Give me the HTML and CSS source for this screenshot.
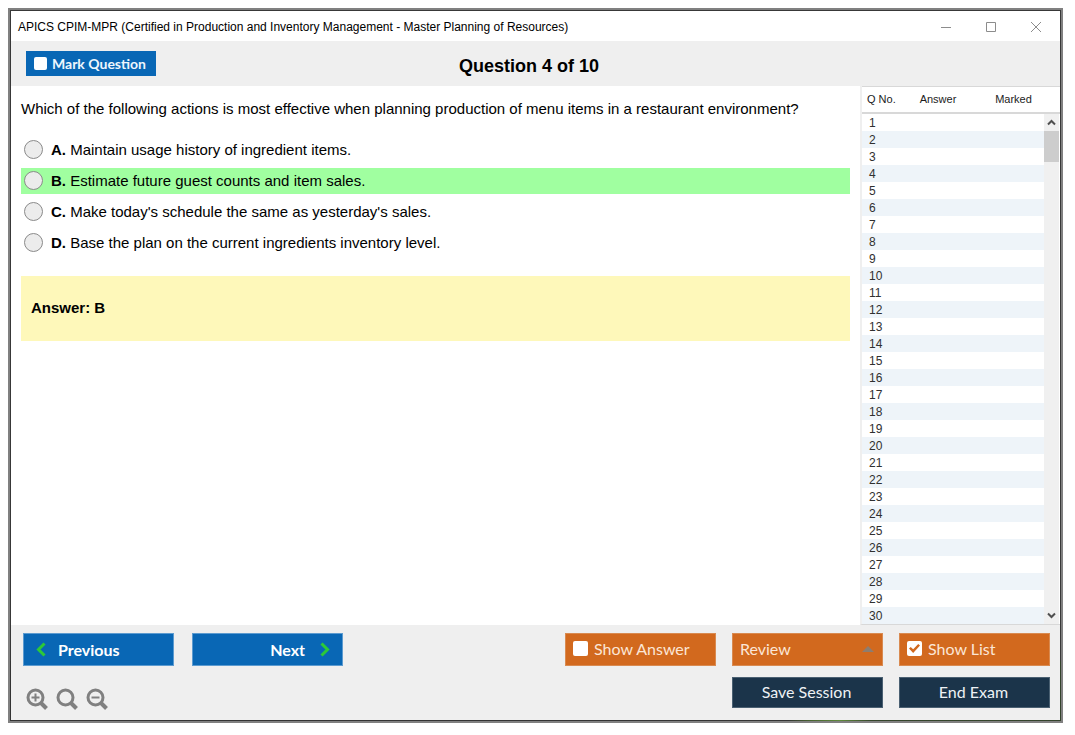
FILE: index.html
```html
<!DOCTYPE html>
<html lang="en">
<head>
    <meta charset="UTF-8">
    <meta name="viewport" content="width=device-width, initial-scale=1.0">
    <title>APICS CPIM-MPR</title>
    <link rel="stylesheet" href="styles.css">
</head>
<body>
    <div class="window">
        <div class="titlebar">
            <span class="title">APICS CPIM-MPR (Certified in Production and Inventory Management - Master Planning of Resources)</span>
            <div class="window-buttons">
                <button aria-label="Minimize"><svg width="12" height="12" viewBox="0 0 12 12"><path d="M1 6.500h10"/></svg></button>
                <button aria-label="Maximize"><svg width="12" height="12" viewBox="0 0 12 12"><path d="M1.500 1.500h9v9h-9z"/></svg></button>
                <button aria-label="Close"><svg width="12" height="12" viewBox="0 0 12 12"><path d="M1 1l10 10M11 1L1 11"/></svg></button>
            </div>
        </div>

        <header class="header">
            <label class="mark"><input type="checkbox"> Mark Question</label>
            <h1>Question 4 of 10</h1>
        </header>

        <div class="content">
            <main class="question">
                <p>Which of the following actions is most effective when planning production of menu items in a restaurant environment?</p>
                <div class="options">
                    <label class="option"><input type="radio" name="choice"><span><b>A.</b> Maintain usage history of ingredient items.</span></label>
                    <label class="option correct"><input type="radio" name="choice"><span><b>B.</b> Estimate future guest counts and item sales.</span></label>
                    <label class="option"><input type="radio" name="choice"><span><b>C.</b> Make today's schedule the same as yesterday's sales.</span></label>
                    <label class="option"><input type="radio" name="choice"><span><b>D.</b> Base the plan on the current ingredients inventory level.</span></label>
                </div>
                <div class="answer">Answer: B</div>
            </main>

            <aside class="list">
                <table>
                    <thead>
                        <tr><th class="col-no">Q No.</th><th class="col-answer">Answer</th><th class="col-marked">Marked</th></tr>
                    </thead>
                    <tbody>
                        <tr><td>1</td><td></td><td></td></tr>
                        <tr><td>2</td><td></td><td></td></tr>
                        <tr><td>3</td><td></td><td></td></tr>
                        <tr><td>4</td><td></td><td></td></tr>
                        <tr><td>5</td><td></td><td></td></tr>
                        <tr><td>6</td><td></td><td></td></tr>
                        <tr><td>7</td><td></td><td></td></tr>
                        <tr><td>8</td><td></td><td></td></tr>
                        <tr><td>9</td><td></td><td></td></tr>
                        <tr><td>10</td><td></td><td></td></tr>
                        <tr><td>11</td><td></td><td></td></tr>
                        <tr><td>12</td><td></td><td></td></tr>
                        <tr><td>13</td><td></td><td></td></tr>
                        <tr><td>14</td><td></td><td></td></tr>
                        <tr><td>15</td><td></td><td></td></tr>
                        <tr><td>16</td><td></td><td></td></tr>
                        <tr><td>17</td><td></td><td></td></tr>
                        <tr><td>18</td><td></td><td></td></tr>
                        <tr><td>19</td><td></td><td></td></tr>
                        <tr><td>20</td><td></td><td></td></tr>
                        <tr><td>21</td><td></td><td></td></tr>
                        <tr><td>22</td><td></td><td></td></tr>
                        <tr><td>23</td><td></td><td></td></tr>
                        <tr><td>24</td><td></td><td></td></tr>
                        <tr><td>25</td><td></td><td></td></tr>
                        <tr><td>26</td><td></td><td></td></tr>
                        <tr><td>27</td><td></td><td></td></tr>
                        <tr><td>28</td><td></td><td></td></tr>
                        <tr><td>29</td><td></td><td></td></tr>
                        <tr><td>30</td><td></td><td></td></tr>
                    </tbody>
                </table>
                <div class="scroll-side">
                    <div class="scroll-head"></div>
                    <div class="scrollbar">
                        <button aria-label="Scroll up"><svg width="9" height="7" viewBox="0 0 9 7"><path d="M1 5.500l3.500-3.500L8 5.500"/></svg></button>
                        <div class="thumb"></div>
                        <button class="down" aria-label="Scroll down"><svg width="9" height="7" viewBox="0 0 9 7"><path d="M1 1.500L4.500 5 8 1.500"/></svg></button>
                    </div>
                </div>
            </aside>
        </div>

        <footer class="footer">
            <div class="nav">
                <div class="nav-buttons">
                    <button class="btn blue previous"><svg width="10" height="15" viewBox="0 0 10 15"><path d="M8.500 1.500l-6 6 6 6"/></svg>Previous</button>
                    <button class="btn blue next">Next<svg width="10" height="15" viewBox="0 0 10 15"><path d="M1.500 1.500l6 6-6 6"/></svg></button>
                </div>
                <div class="zoom">
                    <button aria-label="Zoom in"><svg width="22" height="22" viewBox="0 0 22 22"><circle cx="9.500" cy="9.500" r="7.500"/><path class="handle" d="M15 15l5.500 5.500"/><path class="sign" d="M5.500 9.500h8M9.500 5.500v8"/></svg></button>
                    <button aria-label="Reset zoom"><svg width="22" height="22" viewBox="0 0 22 22"><circle cx="9.500" cy="9.500" r="7.500"/><path class="handle" d="M15 15l5.500 5.500"/></svg></button>
                    <button aria-label="Zoom out"><svg width="22" height="22" viewBox="0 0 22 22"><circle cx="9.500" cy="9.500" r="7.500"/><path class="handle" d="M15 15l5.500 5.500"/><path class="sign" d="M5.500 9.500h8"/></svg></button>
                </div>
            </div>
            <div class="actions">
                <label class="btn orange show-answer"><input type="checkbox"> Show Answer</label>
                <div class="btn orange review">
                    <select aria-label="Review"><option>Review</option></select>
                    <svg width="12" height="6" viewBox="0 0 12 6"><path d="M0 6l6-6 6 6z"/></svg>
                </div>
                <label class="btn orange"><input type="checkbox" checked> Show List</label>
                <button class="btn navy save">Save Session</button>
                <button class="btn navy">End Exam</button>
            </div>
        </footer>
    </div>
</body>
</html>
```
FILE: styles.css
```css
* {
    box-sizing: border-box;
}
body {
    margin: 0;
    padding: 8px 12px 12px 8px;
    height: 100vh;
    background-color: #ffffff;
    color: #000000;
    font-family: "Liberation Sans", Arial, sans-serif;
    font-size: 15px;
}
button {
    margin: 0;
    padding: 0;
    border: none;
    background: none;
    cursor: pointer;
}
svg {
    display: block;
    fill: none;
}
.window {
    display: flex;
    flex-direction: column;
    min-height: 100%;
    border: 2px solid #808080;
    padding: 1px;
    background: linear-gradient(to right, #333333 74%, #45602f 76%, #5f8a3a 79%, #34452a 82%, #33422b) bottom / 100% 60px no-repeat #383838;
}

/* title bar */
.titlebar {
    display: flex;
    align-items: center;
    justify-content: space-between;
    height: 30px;
    padding: 1px 18px 0 7px;
    background-color: #ffffff;
    font-size: 12px;
}
.window-buttons {
    display: flex;
    gap: 33px;
}
.window-buttons svg {
    stroke: #8c8c8c;
}

/* header */
.header {
    display: grid;
    grid-template-columns: 1fr auto 1fr;
    align-items: center;
    height: 45px;
    padding: 0 28px 0 15px;
    background-color: #efefef;
}
.header h1 {
    margin: 5px 0 0;
    font-size: 18px;
}
.mark {
    display: flex;
    align-items: center;
    justify-self: start;
    gap: 5px;
    height: 25px;
    padding: 0 10px 0 8px;
    background-color: #0967b5;
    color: #eef6fd;
    font-family: Lato, sans-serif;
    font-size: 14px;
    font-weight: bold;
}
input[type="checkbox"] {
    appearance: none;
    flex: none;
    width: 15px;
    height: 15px;
    margin: 0;
    border-radius: 2px;
    background-color: #ffffff;
}
.mark input[type="checkbox"] {
    width: 13px;
    height: 13px;
}
input[type="checkbox"]:checked {
    display: grid;
    place-items: center;
}
input[type="checkbox"]:checked::before {
    content: "";
    width: 11px;
    height: 9px;
    background-color: #d2691e;
    clip-path: polygon(0 50%, 16% 32%, 38% 58%, 84% 0, 100% 18%, 38% 100%);
}

/* question */
.content {
    display: flex;
    flex: 1;
    background-color: #ffffff;
}
.question {
    flex: 1;
    padding: 14px 10px 0;
}
.question p {
    margin: 0 0 19px;
    line-height: 18px;
}
.options {
    display: flex;
    flex-direction: column;
    gap: 5px;
}
.option {
    display: flex;
    align-items: center;
    gap: 8px;
    height: 26px;
    padding: 0 0 1px 3px;
}
.option.correct {
    background-color: #a0ffa0;
}
.option input {
    appearance: none;
    width: 19px;
    height: 19px;
    margin: 0;
    border: 1px solid #8a8a8a;
    border-radius: 50%;
    background-color: #ececec;
}
.answer {
    display: flex;
    align-items: center;
    height: 65px;
    margin-top: 20px;
    padding: 0 0 2px 10px;
    background-color: #fef8ba;
    font-weight: bold;
}

/* question list */
.list {
    display: flex;
    width: 200px;
    border-left: 2px solid #efefef;
    border-bottom: 1px solid #d8d8d8;
}
.list table {
    flex: 1;
    border-collapse: separate;
    border-spacing: 0;
    table-layout: fixed;
    font-size: 12px;
    color: #303030;
}
.list th,
.scroll-head {
    height: 28px;
    border-top: 1px solid #d8d8d8;
    border-bottom: 2px solid #d8d8d8;
}
.list th {
    padding: 0 0 2px;
    color: #1c1c1c;
    font-size: 11px;
    font-weight: normal;
}
.list td {
    height: 17px;
    padding: 2px 0 0 7px;
    line-height: 15px;
}
.list tr:nth-child(even) td {
    background-color: #eef4f9;
}
.list .col-no {
    width: 42px;
    padding-left: 5px;
    text-align: left;
}
.list .col-answer {
    width: 68px;
}
.list .col-marked {
    padding-left: 11px;
}
.scroll-side {
    display: flex;
    flex-direction: column;
    width: 16px;
}
.scrollbar {
    display: flex;
    flex: 1;
    flex-direction: column;
    border-right: 1px solid #ffffff;
    background-color: #f0f0f0;
}
.scrollbar button {
    display: grid;
    place-items: center;
    height: 17px;
}
.scrollbar .down {
    margin-top: auto;
}
.scrollbar svg {
    stroke: #505050;
    stroke-width: 2;
}
.thumb {
    height: 31px;
    background-color: #cdcdcd;
}

/* footer */
.footer {
    display: flex;
    justify-content: space-between;
    padding: 8px 10px 10px 12px;
    background-color: #efefef;
}
.nav-buttons {
    display: flex;
    gap: 18px;
}
.btn {
    display: flex;
    align-items: center;
    width: 151px;
    height: 33px;
    font-family: Lato, sans-serif;
    font-size: 16px;
}
.blue {
    border: 1px solid #5c9bd0;
    background-color: #0967b5;
    color: #ffffff;
    font-weight: bold;
}
.blue svg {
    stroke: #2dc937;
    stroke-width: 3;
}
.previous {
    gap: 12px;
    padding-left: 12px;
}
.next {
    justify-content: flex-end;
    gap: 15px;
    padding-right: 12px;
}
.zoom {
    display: flex;
    gap: 8px;
    padding: 22px 0 0 3px;
}
.zoom svg {
    stroke: #808080;
    stroke-width: 3;
}
.zoom .handle {
    stroke-width: 4;
}
.zoom .sign {
    stroke-width: 2;
}
.actions {
    display: grid;
    grid-template-columns: repeat(3, auto);
    align-content: start;
    gap: 11px 16px;
}
.orange {
    gap: 6px;
    padding: 0 8px 2px 7px;
    border: 1px solid #d98a50;
    background-color: #d2691e;
    color: #fbe6d6;
}
.review select {
    appearance: none;
    flex: 1;
    padding: 0;
    border: none;
    background: none;
    color: inherit;
    font: inherit;
}
.review path {
    fill: #8d7d70;
}
.navy {
    justify-content: center;
    height: 31px;
    padding: 0 2px 2px 0;
    border: 1px solid #4a6072;
    background-color: #1b344a;
    color: #eef2f5;
}
.save {
    grid-column: 2;
}
```
